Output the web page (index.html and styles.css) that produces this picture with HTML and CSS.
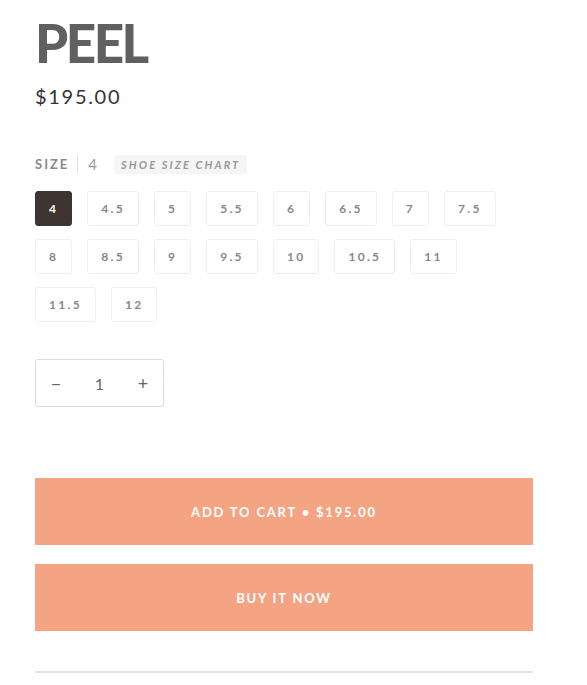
FILE: index.html
```html
<!DOCTYPE html>
<html>
<head>
<meta charset="utf-8">
<link rel="stylesheet" href="styles.css">
</head>
<body>
<div class="product">
  <h1 class="title">PEEL</h1>
  <div class="price">$195.00</div>

  <div class="size-label">
    <span class="size-name">SIZE</span>
    <span class="size-sep"></span>
    <span class="size-value">4</span>
    <span class="chart">SHOE SIZE CHART</span>
  </div>

  <div class="sizes">
    <span class="sz selected">4</span>
    <span class="sz">4.5</span>
    <span class="sz">5</span>
    <span class="sz">5.5</span>
    <span class="sz">6</span>
    <span class="sz">6.5</span>
    <span class="sz">7</span>
    <span class="sz">7.5</span>
    <span class="sz">8</span>
    <span class="sz">8.5</span>
    <span class="sz">9</span>
    <span class="sz">9.5</span>
    <span class="sz">10</span>
    <span class="sz">10.5</span>
    <span class="sz">11</span>
    <span class="sz">11.5</span>
    <span class="sz">12</span>
  </div>

  <div class="qty">
    <span class="qbtn">−</span>
    <span class="qval">1</span>
    <span class="qbtn">+</span>
  </div>

  <button class="btn cart">ADD TO CART • $195.00</button>
  <button class="btn buy">BUY IT NOW</button>

  <hr class="divider">
</div>
</body>
</html>
```

FILE: styles.css
```css
html, body {
  margin: 0;
  padding: 0;
  background: #fff;
}
body {
  font-family: "Lato", "Liberation Sans", sans-serif;
}
.product {
  width: 498px;
  padding: 15px 0 0 35px;
}
.title {
  margin: 0;
  font-size: 53px;
  line-height: 56px;
  font-weight: 900;
  color: #606060;
  letter-spacing: -2.5px;
}
.price {
  margin-top: 13px;
  font-size: 20px;
  line-height: 24px;
  color: #333;
  letter-spacing: 1.7px;
}
.size-label {
  display: flex;
  align-items: center;
  margin-top: 46px;
  height: 20px;
}
.size-name {
  font-size: 13px;
  font-weight: 700;
  color: #8a8a8a;
  letter-spacing: 2px;
}
.size-sep {
  width: 1px;
  height: 16px;
  background: #e2e2e2;
  margin: 0 10px 0 8px;
}
.size-value {
  font-size: 15px;
  color: #999;
  margin-right: 17px;
}
.chart {
  background: #f5f5f5;
  border-radius: 3px;
  padding: 3px 7px;
  font-size: 11px;
  font-weight: 700;
  font-style: italic;
  color: #999;
  letter-spacing: 2.1px;
}
.sizes {
  display: flex;
  flex-wrap: wrap;
  column-gap: 15px;
  row-gap: 13px;
  margin-top: 17px;
  width: 475px;
}
.sz {
  box-sizing: border-box;
  height: 35px;
  min-width: 37px;
  padding: 0 13px;
  border: 1px solid #efefef;
  border-radius: 3px;
  display: flex;
  align-items: center;
  justify-content: center;
  font-size: 12px;
  font-weight: 700;
  color: #888;
  letter-spacing: 2.3px;
}
.sz.selected {
  background: #3e3432;
  border-color: #3e3432;
  color: #fff;
}
.qty {
  box-sizing: border-box;
  margin-top: 37px;
  width: 129px;
  height: 48px;
  border: 1px solid #ddd;
  border-radius: 3px;
  display: flex;
  align-items: center;
  justify-content: space-between;
  padding: 0 14px 0 14px;
  color: #666;
}
.qbtn {
  font-size: 18px;
  width: 12px;
  text-align: center;
}
.qval {
  font-size: 16px;
}
.btn {
  display: block;
  width: 498px;
  height: 67px;
  border: none;
  background: #f4a483;
  color: #fff;
  font-family: "Lato", "Liberation Sans", sans-serif;
  font-size: 13px;
  font-weight: 700;
  letter-spacing: 1.8px;
  padding: 0;
}
.cart {
  margin-top: 71px;
}
.buy {
  margin-top: 19px;
}
.divider {
  margin: 40px 0 0;
  border: none;
  border-top: 2px solid #e3e3e3;
  width: 498px;
}
```
